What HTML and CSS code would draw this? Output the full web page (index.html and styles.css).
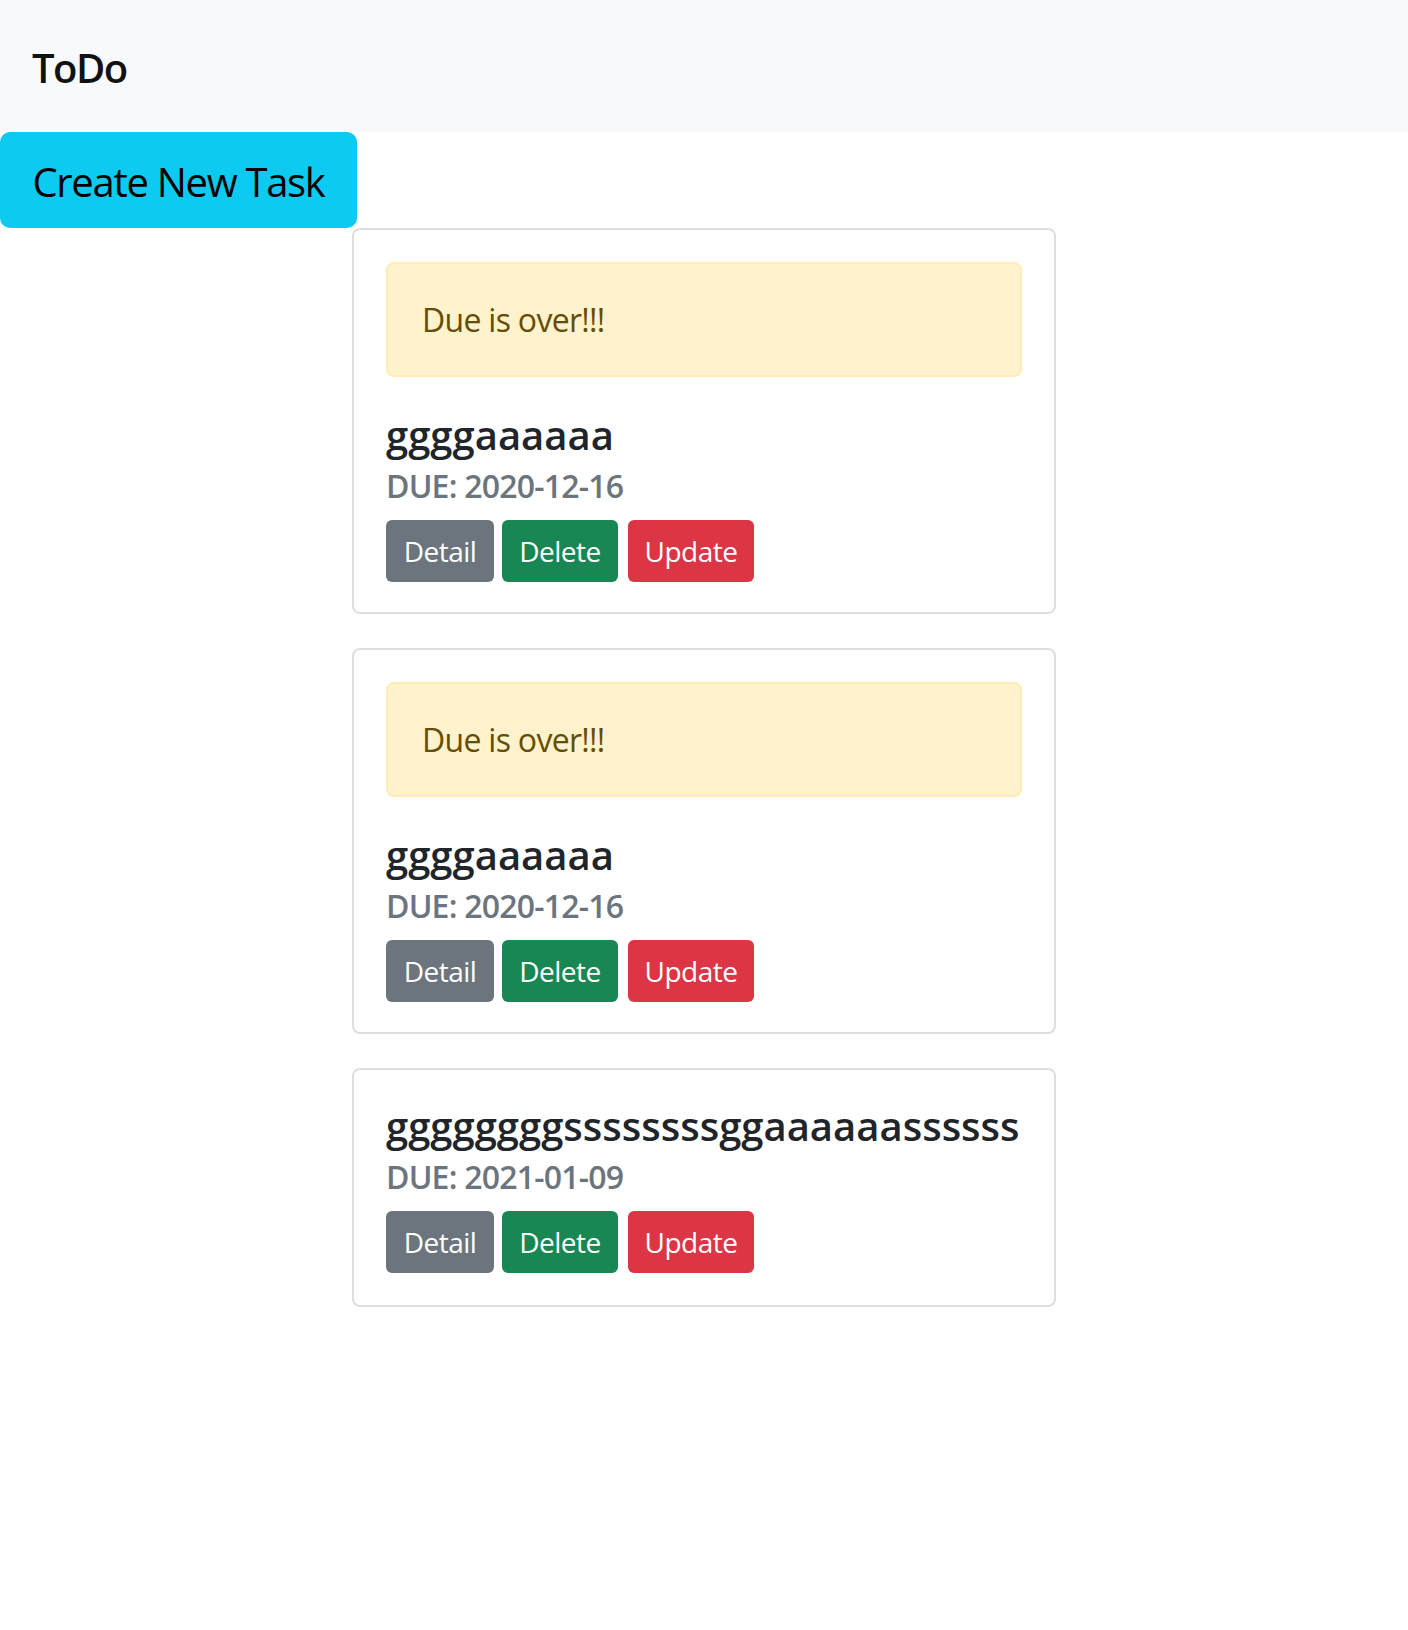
FILE: index.html
```html
<!DOCTYPE html>
<html lang="en">
<head>
<meta charset="utf-8">
<title>ToDo</title>
<link rel="stylesheet" href="styles.css">
</head>
<body>
<nav class="navbar">
  <span class="brand">ToDo</span>
</nav>
<div class="actions">
  <a class="btn btn-lg btn-info" href="#">Create New Task</a>
</div>
<main class="list">
  <section class="card card-overdue">
    <div class="alert">Due is over!!!</div>
    <h5 class="card-title">ggggaaaaaa</h5>
    <h6 class="card-subtitle">DUE: 2020-12-16</h6>
    <div class="btn-row">
      <a class="btn btn-sm btn-secondary" href="#">Detail</a>
      <a class="btn btn-sm btn-success" href="#">Delete</a>
      <a class="btn btn-sm btn-danger" href="#">Update</a>
    </div>
  </section>
  <section class="card card-overdue">
    <div class="alert">Due is over!!!</div>
    <h5 class="card-title">ggggaaaaaa</h5>
    <h6 class="card-subtitle">DUE: 2020-12-16</h6>
    <div class="btn-row">
      <a class="btn btn-sm btn-secondary" href="#">Detail</a>
      <a class="btn btn-sm btn-success" href="#">Delete</a>
      <a class="btn btn-sm btn-danger" href="#">Update</a>
    </div>
  </section>
  <section class="card">
    <h5 class="card-title">ggggggggssssssssggaaaaaassssss</h5>
    <h6 class="card-subtitle">DUE: 2021-01-09</h6>
    <div class="btn-row">
      <a class="btn btn-sm btn-secondary" href="#">Detail</a>
      <a class="btn btn-sm btn-success" href="#">Delete</a>
      <a class="btn btn-sm btn-danger" href="#">Update</a>
    </div>
  </section>
</main>
</body>
</html>
```
FILE: styles.css
```css
* { box-sizing: border-box; }
html, body {
  margin: 0;
  padding: 0;
  background: #fff;
  font-family: "Open Sans", "Noto Sans", sans-serif;
  color: #212529;
  font-size: 32px;
  line-height: 1.5;
}
.navbar {
  height: 132px;
  background: #f8f9fa;
  display: flex;
  align-items: center;
  padding-left: 32px;
}
.brand {
  font-size: 40px;
  font-weight: 600;
  color: #111;
  line-height: 1;
  margin-top: 4px;
  letter-spacing: -1.5px;
}
.actions {
  display: flex;
}
.btn {
  display: inline-flex;
  align-items: center;
  justify-content: center;
  color: #fff;
  text-decoration: none;
  border: 2px solid transparent;
  white-space: nowrap;
}
.btn-lg {
  height: 96px;
  width: 357px;
  font-size: 40px;
  border-radius: 10px;
  letter-spacing: -1.3px;
  padding-top: 4px;
}
.btn-info {
  background: #0dcaf0;
  border-color: #0dcaf0;
  color: #000;
}
.list {
  display: flex;
  flex-direction: column;
  align-items: center;
  gap: 34px;
}
.card {
  width: 704px;
  border: 2px solid #dfdfdf;
  border-radius: 8px;
  padding: 32px;
}
.card-overdue {
  padding-bottom: 30px;
}
.alert {
  height: 115px;
  background: #fff3cd;
  border: 2px solid #ffecb5;
  border-radius: 8px;
  color: #664d03;
  padding: 0 34px;
  display: flex;
  align-items: center;
  margin-bottom: 34px;
  font-size: 32px;
  letter-spacing: -0.7px;
}
.card-title {
  margin: 0 0 16px;
  font-size: 40px;
  font-weight: 600;
  line-height: 48px;
  white-space: nowrap;
}
.card-subtitle {
  margin: -8px 0 15px;
  font-size: 32px;
  font-weight: 600;
  line-height: 38px;
  color: #6c757d;
  letter-spacing: -0.8px;
}
.btn-row {
  display: flex;
}
.btn-sm {
  height: 62px;
  font-size: 28px;
  border-radius: 6px;
  padding: 0 16px;
  letter-spacing: -0.5px;
}
.btn-secondary { background: #6c757d; width: 108px; margin-right: 8px; }
.btn-success { background: #198754; width: 116px; margin-right: 10px; }
.btn-danger { background: #dc3545; width: 126px; }
```
